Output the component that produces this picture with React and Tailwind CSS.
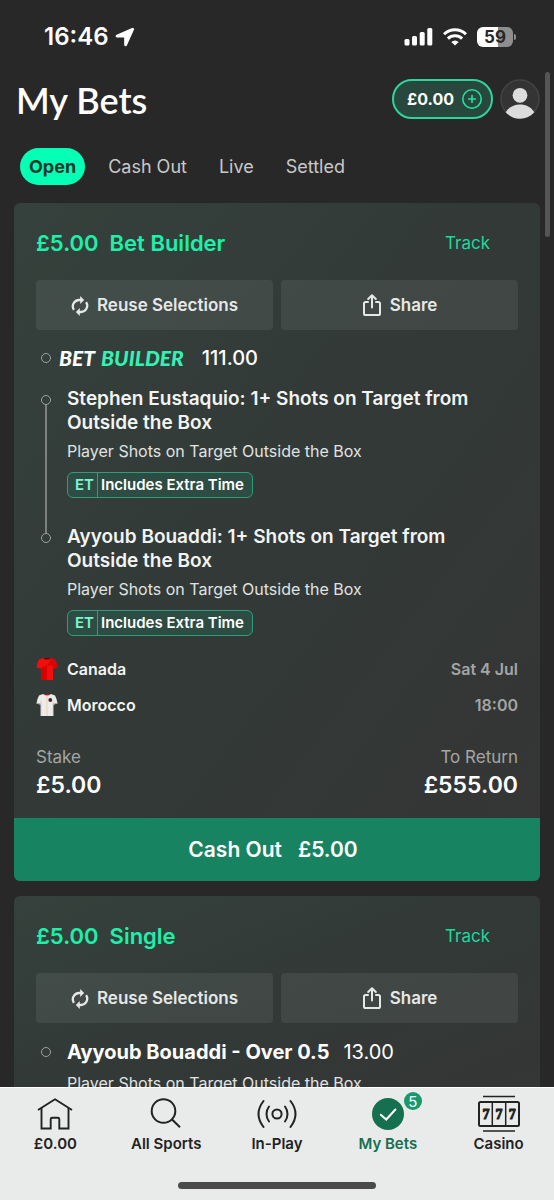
import React from "react";

function LocationArrow() {
  return (
    <svg width="20" height="20" viewBox="0 0 20 20" aria-hidden="true">
      <path d="M17.3 1.500 1.800 8.400c-.9.400-.7 1.500.3 1.500h7.700v7.800c0 1 1.200 1.200 1.600.3l7-15.400c.3-.8-.4-1.400-1.100-1.100Z" fill="#fff" stroke="#fff" strokeWidth="1.200" strokeLinejoin="round" />
    </svg>
  );
}

function SignalIcon() {
  return (
    <svg width="29" height="20" viewBox="0 0 29 20" fill="#fff" aria-hidden="true">
      <rect x="0.500" y="12" width="5" height="6.500" rx="1.500" />
      <rect x="8" y="9" width="5" height="9.500" rx="1.500" />
      <rect x="15.700" y="5" width="5" height="13.500" rx="1.500" />
      <rect x="23.300" y="1" width="5" height="17.500" rx="1.500" />
    </svg>
  );
}

function WifiIcon() {
  return (
    <svg width="24" height="18" viewBox="0 0 24 18" fill="none" stroke="#fff" strokeWidth="3" aria-hidden="true">
      <path d="M1 6.300a15.600 15.600 0 0 1 22 0" />
      <path d="M4.900 10.600a10.200 10.200 0 0 1 14.200 0" />
      <path d="M12 17.600 8.300 14a5.300 5.300 0 0 1 7.400 0Z" fill="#fff" stroke="none" />
    </svg>
  );
}

function Battery() {
  return (
    <div className="flex items-center gap-px">
      <div className="flex h-5 w-9 items-center justify-center rounded-md bg-linear-to-r from-white from-59% to-[#8e8e8e] to-59% text-[17px] leading-5 font-bold text-[#282828]">
        59
      </div>
      <div className="h-[6px] w-[2px] rounded-r-full bg-[#8e8e8e]" />
    </div>
  );
}

function ReuseIcon() {
  return (
    <svg width="18" height="22" viewBox="0 0 18 22" fill="none" stroke="#e6e8e7" strokeWidth="2.300" aria-hidden="true">
      <path d="M2.900 14.800A6.300 6.300 0 0 1 8.400 5h2" />
      <path d="M15.100 7.200A6.300 6.300 0 0 1 9.600 17H7.600" />
      <path d="M9.200 1 13.200 5 9.200 9Z" fill="#e6e8e7" stroke="none" />
      <path d="M8.800 13 4.800 17l4 4Z" fill="#e6e8e7" stroke="none" />
    </svg>
  );
}

function ShareIcon() {
  return (
    <svg width="20" height="24" viewBox="0 0 20 24" fill="none" stroke="#e6e8e7" strokeWidth="2" strokeLinecap="round" strokeLinejoin="round" aria-hidden="true">
      <path d="M6 8H3.600A1.600 1.600 0 0 0 2 9.600v9.800A1.600 1.600 0 0 0 3.600 21h12.800a1.600 1.600 0 0 0 1.600-1.600v-9.800A1.600 1.600 0 0 0 16.400 8H14" />
      <path d="M10 13.500V1.500M6.200 5 10 1.200 13.800 5" />
    </svg>
  );
}

function CanadaShirt() {
  return (
    <svg width="22" height="24" viewBox="0 0 22 24" aria-hidden="true">
      <path d="M7 1 3 2.600Q1.300 5.500.5 10.500L5 11.800V23h12V11.800l4.500-1.300Q20.700 5.500 19 2.600L15 1Z" fill="#f30d0d" />
      <path d="M5 11 11 8v15H5Z" fill="#d60202" />
      <path d="M15 1l4 1.600Q20.700 5.500 21.500 10.500L17 11.800 16.500 8 11 9l3-5Z" fill="#d90606" />
      <path d="M7 1q4 3 8 0Z" fill="#5c0606" />
    </svg>
  );
}

function MoroccoShirt() {
  return (
    <svg width="22" height="24" viewBox="0 0 22 24" aria-hidden="true">
      <path d="M7 1 3 2.600Q1.300 5.500.5 10.500L5 11.800V23h12V11.800l4.500-1.300Q20.700 5.500 19 2.600L15 1Z" fill="#eeeceb" />
      <path d="M5 7v16M17 7v16" stroke="#d6d4d3" strokeWidth="1" />
      <path d="M11 3v20" stroke="#ecdcc0" strokeWidth="1.500" />
      <path d="M7 1q4 3 8 0Z" fill="#b01c2e" />
      <circle cx="14.300" cy="7" r="1.900" fill="#3b2a2a" />
      <path d="M.6 10l4.200 1.200M21.400 10l-4.200 1.200" stroke="#b9a08c" strokeWidth="1" />
    </svg>
  );
}

function HomeIcon() {
  return (
    <svg width="36" height="34" viewBox="0 0 36 34" fill="none" stroke="#222" strokeWidth="1.900" aria-hidden="true">
      <path d="M1 13 18 2.300 35 13" strokeLinejoin="round" />
      <path d="M4.500 11v20.500h9.200V22.300a1.500 1.500 0 0 1 1.500-1.500h5.600a1.500 1.500 0 0 1 1.500 1.500v9.200h9.200V11" />
    </svg>
  );
}

function SearchIcon() {
  return (
    <svg width="32" height="34" viewBox="0 0 32 34" fill="none" stroke="#222" strokeWidth="2" aria-hidden="true">
      <circle cx="13.500" cy="14" r="11.800" />
      <path d="m21.800 22.300 8.200 8" />
    </svg>
  );
}

function InPlayIcon() {
  return (
    <svg width="40" height="34" viewBox="0 0 40 34" fill="none" stroke="#222" strokeWidth="2" strokeLinecap="round" aria-hidden="true">
      <circle cx="20" cy="17" r="4.600" />
      <path d="M12 9.500a12.500 12.500 0 0 0 0 15M28 9.500a12.500 12.500 0 0 1 0 15" />
      <path d="M6.500 4Q-3.500 17 6.500 30M33.500 4Q43.500 17 33.500 30" />
    </svg>
  );
}

function CheckIcon() {
  return (
    <svg width="34" height="34" viewBox="0 0 34 34" fill="none" aria-hidden="true">
      <circle cx="17" cy="17" r="16" fill="#15704f" />
      <path d="m9.800 17.800 5.400 4.700 9.200-10" stroke="#fff" strokeWidth="2" strokeLinecap="round" />
    </svg>
  );
}

function CasinoIcon() {
  return (
    <svg width="44" height="38" viewBox="0 0 44 38" fill="none" stroke="#222" strokeWidth="2" aria-hidden="true">
      <path d="M6 1.500h32M6 36h32" strokeWidth="1.500" />
      <rect x="2" y="7" width="40" height="24" rx="1.500" />
      <path d="M15.300 7v24M28.700 7v24" strokeWidth="1.500" />
      <g fill="#222" stroke="#222" strokeWidth="1" strokeLinejoin="round" className="font-['Liberation_Serif',serif] text-[14px] font-bold" textAnchor="middle">
        <text x="8.900" y="23.500">7</text>
        <text x="22" y="23.500">7</text>
        <text x="35.200" y="23.500">7</text>
      </g>
    </svg>
  );
}

function AvatarIcon() {
  return (
    <svg width="40" height="40" viewBox="0 0 40 40" aria-hidden="true">
      <circle cx="20" cy="20" r="19" fill="#343434" stroke="#444" strokeWidth="1.500" />
      <circle cx="20" cy="16.300" r="7.400" fill="#dcdcdc" />
      <path d="M5.700 33.200C9 28 14 25.500 20 25.500S31 28 34.300 33.200A19.500 19.500 0 0 1 20 39.700 19.500 19.500 0 0 1 5.700 33.200Z" fill="#dcdcdc" />
    </svg>
  );
}

function Dot() {
  return <span className="block size-[10px] shrink-0 rounded-full border-[1.5px] border-[#9da1a0]" />;
}

function CardHeader({ stake, kind }) {
  return (
    <>
      <header className="flex h-[77px] items-center justify-between pt-1 pr-7">
        <h2 className="flex gap-[11px] text-[22px] font-semibold text-[#1df0a9]">
          <span>{stake}</span>
          <span>{kind}</span>
        </h2>
        <a href="#track" className="text-[17px] text-[#1cd99b]">Track</a>
      </header>
      <div className="grid grid-cols-2 gap-2">
        <button type="button" className="flex h-[50px] items-center justify-center gap-2 rounded-sm bg-white/7 pt-px text-[17px] font-semibold text-[#e6e8e7]">
          <ReuseIcon />
          Reuse Selections
        </button>
        <button type="button" className="flex h-[50px] items-center justify-center gap-2 rounded-sm bg-white/7 pt-px text-[17px] font-semibold text-[#e6e8e7]">
          <ShareIcon />
          Share
        </button>
      </div>
    </>
  );
}

function Selection({ title, last }) {
  return (
    <li className="flex gap-[11px]">
      <div className="flex w-5 flex-col items-center">
        <div className="h-2 shrink-0" />
        <Dot />
        {!last && <div className="-mb-2 w-[2px] flex-1 bg-[#7d8281]" />}
      </div>
      <div className={last ? "flex-1 pr-10" : "flex-1 pr-10 pb-[27px]"}>
        <h3 className="text-[19px] leading-6 font-semibold text-[#f2f4f3]">{title}</h3>
        <p className="mt-[6px] text-base leading-5 text-[#e0e3e2]">Player Shots on Target Outside the Box</p>
        <div className="mt-[11px] inline-flex h-[26px] items-stretch rounded-md border-[1.5px] border-[#2f9e78] bg-[#2d4c43] align-top text-[15px] leading-6 font-semibold">
          <span className="border-r border-[#2f9e78] pr-[3px] pl-[7px] text-[#7df5cd]">ET</span>
          <span className="pr-2 pl-[3px] text-white">Includes Extra Time</span>
        </div>
      </div>
    </li>
  );
}

function TeamRow({ shirt, name, when }) {
  return (
    <div className="flex h-9 items-center text-base font-semibold">
      {shirt}
      <span className="ml-[9px] flex-1 text-[#f2f4f3]">{name}</span>
      <span className="text-[#a3a6a5]">{when}</span>
    </div>
  );
}

const tabs = ["Cash Out", "Live", "Settled"];
const cardClass = "rounded-md bg-linear-to-br from-[#35413c] via-[#323937] to-[#353535]";

function NavItem({ icon, label, active, badge }) {
  return (
    <a href={"#" + label} aria-current={active ? "page" : undefined} className={active ? "flex flex-1 flex-col items-center pt-[3px] text-[#15704f]" : "flex flex-1 flex-col items-center pt-[3px] text-[#222]"}>
      <span className="relative flex h-[46px] items-center justify-center">
        {icon}
        {badge && (
          <span className="absolute top-px -right-[17px] flex size-[18px] items-center justify-center rounded-full bg-[#169a6b] text-[15px] leading-none text-white">
            {badge}
          </span>
        )}
      </span>
      <span className="text-[15px] leading-[14px] font-semibold">{label}</span>
    </a>
  );
}

export default function App() {
  return (
    <div className="relative flex h-screen flex-col overflow-hidden bg-[#282828] font-['Inter','Liberation_Sans',sans-serif] text-white">
      <div className="flex h-[74px] shrink-0 items-center justify-between pr-[38px] pl-11">
        <div className="flex items-center gap-[6px] text-2xl font-semibold">
          <span>16:46</span>
          <LocationArrow />
        </div>
        <div className="flex items-center gap-[10px]">
          <SignalIcon />
          <WifiIcon />
          <Battery />
        </div>
      </div>

      <header className="flex h-[50px] shrink-0 items-center justify-between pr-[14px] pl-4">
        <h1 className="pt-px font-['Lato','Liberation_Sans',sans-serif] text-4xl font-semibold">My Bets</h1>
        <div className="flex items-center gap-[7px]">
          <button type="button" className="flex h-10 items-center gap-2 rounded-full border-2 border-[#2cd69b] bg-[#28483d] pr-[9px] pl-[13px] text-base font-bold">
            £0.00
            <svg width="20" height="20" viewBox="0 0 20 20" fill="none" stroke="#1fe3a2" strokeWidth="1.600" aria-hidden="true">
              <circle cx="10" cy="10" r="9.200" />
              <path d="M10 6v8M6 10h8" />
            </svg>
          </button>
          <button type="button" aria-label="Account"><AvatarIcon /></button>
        </div>
      </header>

      <nav className="mt-6 flex shrink-0 gap-[14px] px-5 text-lg">
        <button type="button" className="h-[37px] rounded-full bg-[#05ffb4] px-[9px] font-bold text-[#17382c]">Open</button>
        {tabs.map((t) => (
          <button type="button" key={t} className="h-[37px] px-[9px] text-[#c9c9c9]">{t}</button>
        ))}
      </nav>

      <main className="mt-[18px] min-h-0 flex-1 overflow-hidden px-[14px]">
        <article className={cardClass}>
          <div className="px-[22px] pb-[19px]">
            <CardHeader stake="£5.00" kind="Bet Builder" />
            <div className="mt-[14px] flex h-7 items-center">
              <div className="flex w-5 justify-center"><Dot /></div>
              <div className="ml-[3px] flex gap-[6px] font-['Lato','Liberation_Sans',sans-serif] text-[21px] font-black italic">
                <span>BET</span>
                <span className="text-[#37f0b3]">BUILDER</span>
              </div>
              <span className="ml-[18px] text-xl font-medium">111.00</span>
            </div>
            <ul className="mt-[15px]">
              <Selection title="Stephen Eustaquio: 1+ Shots on Target from Outside the Box" />
              <Selection title="Ayyoub Bouaddi: 1+ Shots on Target from Outside the Box" last />
            </ul>
            <div className="mt-[15px]">
              <TeamRow shirt={<CanadaShirt />} name="Canada" when="Sat 4 Jul" />
              <TeamRow shirt={<MoroccoShirt />} name="Morocco" when="18:00" />
            </div>
            <dl className="mt-6 flex justify-between">
              <div>
                <dt className="text-[17px] leading-5 text-[#a3a6a5]">Stake</dt>
                <dd className="mt-1 text-[23px] leading-7 font-semibold">£5.00</dd>
              </div>
              <div className="text-right">
                <dt className="text-[17px] leading-5 text-[#a3a6a5]">To Return</dt>
                <dd className="mt-1 text-[23px] leading-7 font-semibold">£555.00</dd>
              </div>
            </dl>
          </div>
          <button type="button" className="flex h-[63px] w-full items-center justify-center gap-4 rounded-b-md bg-[#178361] pr-2 text-[21px] font-semibold">
            <span>Cash Out</span>
            <span>£5.00</span>
          </button>
        </article>

        <article className={"mt-[15px] " + cardClass}>
          <div className="px-[22px] pb-5">
            <CardHeader stake="£5.00" kind="Single" />
            <div className="mt-[15px] flex gap-[11px]">
              <div className="flex h-7 w-5 items-center justify-center"><Dot /></div>
              <div>
                <h3 className="flex gap-[14px] text-xl leading-7 font-bold">
                  <span>Ayyoub Bouaddi - Over 0.5</span>
                  <span className="font-normal">13.00</span>
                </h3>
                <p className="mt-[7px] text-base leading-5 text-[#e0e3e2]">Player Shots on Target Outside the Box</p>
              </div>
            </div>
          </div>
        </article>
      </main>

      <footer className="shrink-0 border-t border-white bg-[#e9ebea]">
        <nav className="flex">
          <NavItem icon={<HomeIcon />} label="£0.00" />
          <NavItem icon={<SearchIcon />} label="All Sports" />
          <NavItem icon={<InPlayIcon />} label="In-Play" />
          <NavItem icon={<CheckIcon />} label="My Bets" active badge="5" />
          <NavItem icon={<CasinoIcon />} label="Casino" />
        </nav>
        <div className="mx-auto mt-[31px] mb-[11px] h-[7px] w-[198px] rounded-full bg-[#4a4a4a]" />
      </footer>

      <div className="absolute top-[72px] right-[4px] h-[165px] w-[5px] rounded-full bg-[#555]" />
    </div>
  );
}
